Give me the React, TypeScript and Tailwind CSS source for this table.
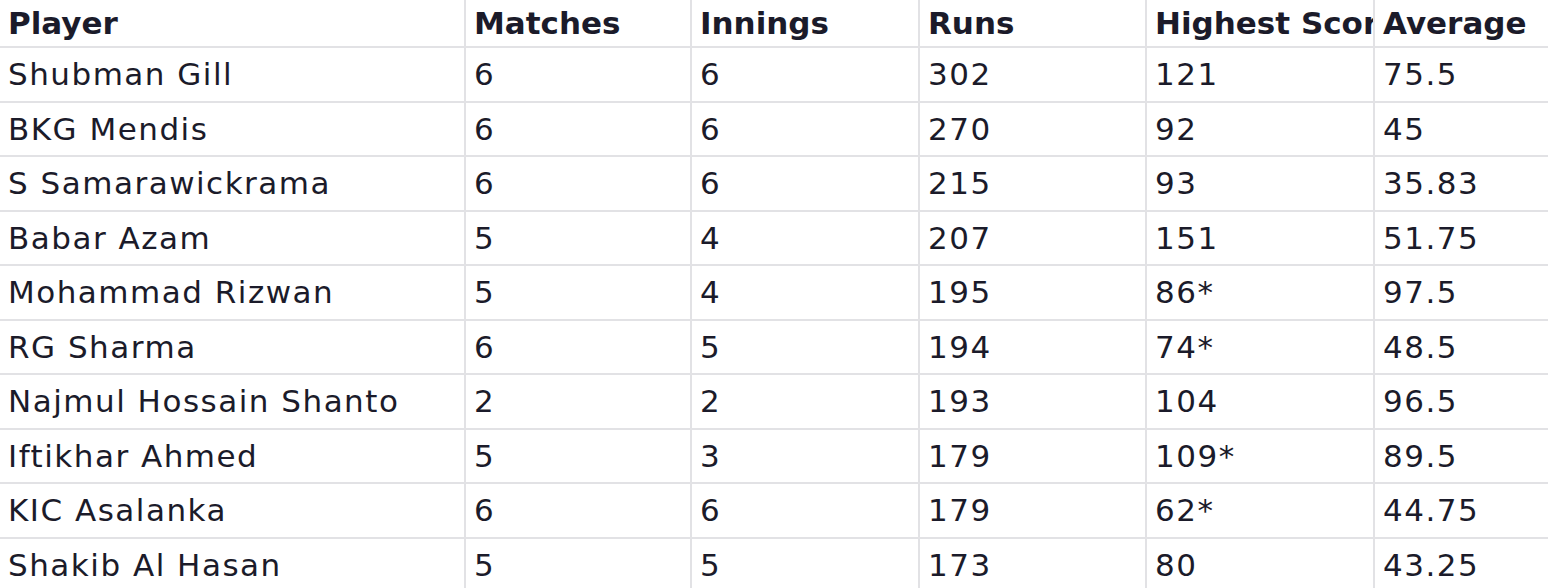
const headers = ['Player', 'Matches', 'Innings', 'Runs', 'Highest Score', 'Average'];

const rows: string[][] = [
  ['Shubman Gill', '6', '6', '302', '121', '75.5'],
  ['BKG Mendis', '6', '6', '270', '92', '45'],
  ['S Samarawickrama', '6', '6', '215', '93', '35.83'],
  ['Babar Azam', '5', '4', '207', '151', '51.75'],
  ['Mohammad Rizwan', '5', '4', '195', '86*', '97.5'],
  ['RG Sharma', '6', '5', '194', '74*', '48.5'],
  ['Najmul Hossain Shanto', '2', '2', '193', '104', '96.5'],
  ['Iftikhar Ahmed', '5', '3', '179', '109*', '89.5'],
  ['KIC Asalanka', '6', '6', '179', '62*', '44.75'],
  ['Shakib Al Hasan', '5', '5', '173', '80', '43.25'],
];

const App = () => {
  return (
    <div className="h-[588px] w-[1548px] overflow-hidden bg-white font-['DejaVu_Sans',sans-serif] text-[#1b1b2a]">
      <div className="grid grid-cols-[464px_226px_228px_227px_228px_1fr]">
        {headers.map((h, i) => (
          <div
            key={h}
            className={`flex h-[48px] items-center overflow-hidden whitespace-nowrap border-b-2 border-[#e2e2e5] pl-2 text-[31px] font-bold ${i > 0 ? 'border-l-2' : ''}`}
          >
            {h}
          </div>
        ))}
        {rows.map((r) =>
          r.map((c, i) => (
            <div
              key={`${r[0]}-${i}`}
              className={`flex h-[54.5px] items-center overflow-hidden whitespace-nowrap border-b-2 border-[#e2e2e5] pl-2 text-[31px] tracking-[1.5px] ${i > 0 ? 'border-l-2' : ''}`}
            >
              {c}
            </div>
          ))
        )}
      </div>
    </div>
  );
};

export default App;
